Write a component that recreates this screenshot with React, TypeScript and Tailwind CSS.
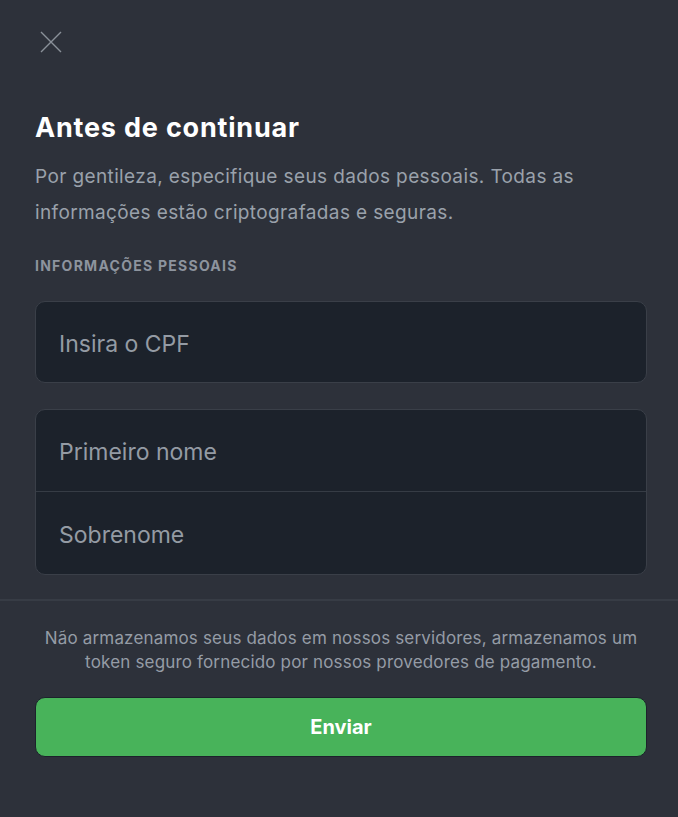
import { useState } from "react";

function CloseIcon() {
  return (
    <svg width="22" height="22" viewBox="0 0 22 22" fill="none" stroke="#8a9099" strokeWidth="1.4">
      <path d="M1 1 L21 21 M21 1 L1 21" />
    </svg>
  );
}

export default function App() {
  const [cpf, setCpf] = useState("");
  const [first, setFirst] = useState("");
  const [last, setLast] = useState("");

  return (
    <div className="min-h-[817px] w-full bg-[#2d313a] font-['Inter','Open_Sans',sans-serif] flex flex-col">
      <div className="pl-[35px] pr-[31px] pt-[31px]">
        <button className="block ml-[5px] h-[22px] w-[22px]">
          <CloseIcon />
        </button>
        <h1 className="mt-[57px] text-[27px] font-bold tracking-[0.8px] leading-[36px] text-white">Antes de continuar</h1>
        <p className="mt-[13px] text-[19px] tracking-[0.02em] leading-[36px] text-[#9aa1ab]">
          Por gentileza, especifique seus dados pessoais. Todas as informações estão criptografadas e seguras.
        </p>
        <div className="mt-[25px] text-[14px] font-bold tracking-[0.09em] leading-[20px] text-[#8d949e]">
          INFORMAÇÕES PESSOAIS
        </div>
        <div className="mt-[25px] rounded-[10px] border border-[#3a3f48] bg-[#1c222b]">
          <input
            value={cpf}
            onChange={(e) => setCpf(e.target.value)}
            placeholder="Insira o CPF"
            className="h-[80px] w-full bg-transparent px-[23px] pt-[3px] text-[23px] text-white outline-none placeholder:text-[#949ba4]"
          />
        </div>
        <div className="mt-[26px] rounded-[10px] border border-[#3a3f48] bg-[#1c222b] overflow-hidden">
          <input
            value={first}
            onChange={(e) => setFirst(e.target.value)}
            placeholder="Primeiro nome"
            className="h-[82px] w-full bg-transparent px-[23px] pt-[2px] text-[23px] text-white outline-none placeholder:text-[#949ba4] border-b border-[#363c45]"
          />
          <input
            value={last}
            onChange={(e) => setLast(e.target.value)}
            placeholder="Sobrenome"
            className="h-[82px] w-full bg-transparent px-[23px] pt-[3px] text-[23px] text-white outline-none placeholder:text-[#949ba4]"
          />
        </div>
      </div>
      <div className="mt-[24px] border-t-2 border-[#373c45] pl-[35px] pr-[31px] pt-[25px]">
        <p className="text-center text-[17px] tracking-[0.01em] leading-[24px] text-[#959ca6]">
          Não armazenamos seus dados em nossos servidores, armazenamos um token seguro fornecido por nossos provedores de pagamento.
        </p>
        <button className="mt-[23px] h-[60px] w-full rounded-[10px] bg-[#48b35a] border border-[#1c222b] text-[20px] font-bold text-white">
          Enviar
        </button>
      </div>
    </div>
  );
}
